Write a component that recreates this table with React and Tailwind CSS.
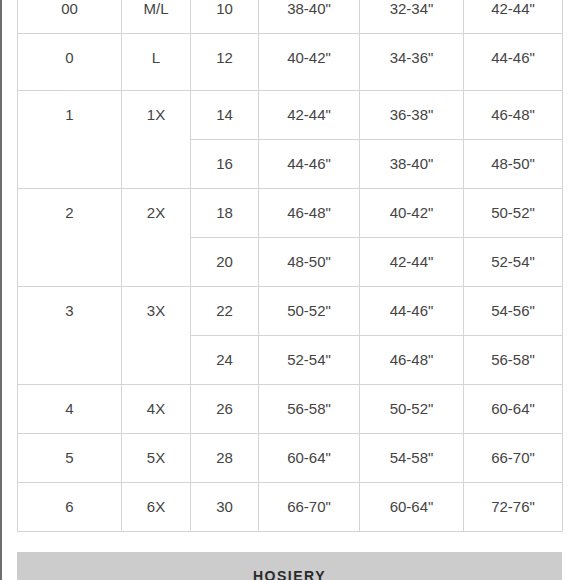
import React from 'react'

const ROWS = [
  { size: '00', alpha: 'M/L', uk: ['10'], bust: ['38-40"'], waist: ['32-34"'], hip: ['42-44"'] },
  { size: '0', alpha: 'L', uk: ['12'], bust: ['40-42"'], waist: ['34-36"'], hip: ['44-46"'], tall: true },
  { size: '1', alpha: '1X', uk: ['14', '16'], bust: ['42-44"', '44-46"'], waist: ['36-38"', '38-40"'], hip: ['46-48"', '48-50"'] },
  { size: '2', alpha: '2X', uk: ['18', '20'], bust: ['46-48"', '48-50"'], waist: ['40-42"', '42-44"'], hip: ['50-52"', '52-54"'] },
  { size: '3', alpha: '3X', uk: ['22', '24'], bust: ['50-52"', '52-54"'], waist: ['44-46"', '46-48"'], hip: ['54-56"', '56-58"'] },
  { size: '4', alpha: '4X', uk: ['26'], bust: ['56-58"'], waist: ['50-52"'], hip: ['60-64"'] },
  { size: '5', alpha: '5X', uk: ['28'], bust: ['60-64"'], waist: ['54-58"'], hip: ['66-70"'] },
  { size: '6', alpha: '6X', uk: ['30'], bust: ['66-70"'], waist: ['60-64"'], hip: ['72-76"'] },
]

const cell = 'border border-[#d4d4d4] align-top text-center p-0 pt-[15px]'

function SizeGroup({ row }) {
  const span = row.uk.length
  const h = row.tall ? 'h-[57px]' : 'h-[49px]'
  return row.uk.map((uk, i) => (
    <tr key={uk} className={h}>
      {i === 0 && (
        <>
          <td rowSpan={span} className={cell}>{row.size}</td>
          <td rowSpan={span} className={cell}>{row.alpha}</td>
        </>
      )}
      <td className={cell}>{uk}</td>
      <td className={cell}>{row.bust[i]}</td>
      <td className={cell}>{row.waist[i]}</td>
      <td className={cell}>{row.hip[i]}</td>
    </tr>
  ))
}

export default function App() {
  return (
    <div className="w-[580px] h-[580px] overflow-hidden bg-white border-l-2 border-[#6e6e6e] font-['Liberation_Sans',Arial,sans-serif] text-[15px] leading-[18px] text-[#444]">
      <div className="pl-[15px] w-[563px]">
        <table className="-mt-[16px] w-[545px] border-collapse table-fixed">
          <colgroup>
            <col className="w-[104px]" />
            <col className="w-[69px]" />
            <col className="w-[68px]" />
            <col className="w-[101px]" />
            <col className="w-[104px]" />
            <col className="w-[99px]" />
          </colgroup>
          <tbody>
            {ROWS.map((row) => (
              <SizeGroup key={row.size} row={row} />
            ))}
          </tbody>
        </table>

        <div className="mt-[20px] w-[545px] h-[40px] bg-[#cccccc] pt-[15px] text-center font-bold text-[14px] tracking-[1.5px] text-[#2a2a2a]">
          HOSIERY
        </div>
      </div>
    </div>
  )
}
